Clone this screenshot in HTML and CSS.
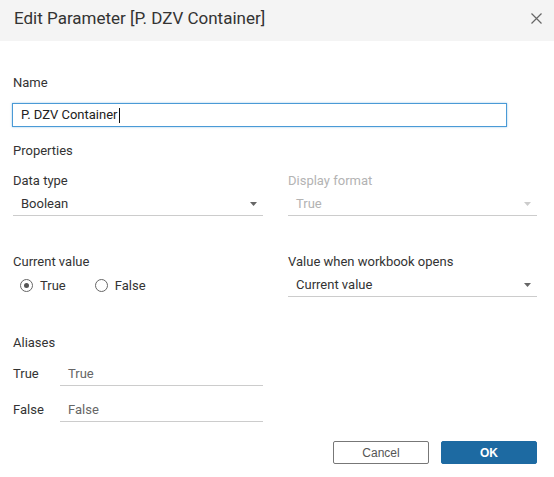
FILE: index.html
```html
<!DOCTYPE html>
<html lang="en">
<head>
<meta charset="utf-8">
<title>Edit Parameter</title>
<link rel="stylesheet" href="styles.css">
</head>
<body>
<div class="dialog">
  <header class="dlg-head">
    <h1 class="dlg-title">Edit Parameter [P. DZV Container]</h1>
    <button class="close-btn" aria-label="Close">
      <svg width="11" height="11" viewBox="0 0 11 11"><path d="M0.5 0.5 L10.5 10.5 M10.5 0.5 L0.5 10.5" stroke="#666" stroke-width="1.2" fill="none"/></svg>
    </button>
  </header>
  <main class="dlg-body">
    <div class="lbl name-lbl">Name</div>
    <div class="name-input"><span>P. DZV Container</span><span class="caret"></span></div>

    <div class="lbl section-title">Properties</div>
    <div class="grid row1">
      <div class="field">
        <div class="lbl">Data type</div>
        <div class="select">
          <span>Boolean</span>
          <svg class="arrow" width="7" height="4" viewBox="0 0 7 4"><path d="M0 0 H7 L3.5 4 Z" fill="#666"/></svg>
        </div>
      </div>
      <div class="field disabled">
        <div class="lbl">Display format</div>
        <div class="select">
          <span>True</span>
          <svg class="arrow" width="7" height="4" viewBox="0 0 7 4"><path d="M0 0 H7 L3.5 4 Z" fill="#ccc"/></svg>
        </div>
      </div>
    </div>

    <div class="grid row2">
      <div class="field">
        <div class="lbl">Current value</div>
        <div class="radios">
          <label class="radio"><span class="circle checked"></span><span>True</span></label>
          <label class="radio"><span class="circle"></span><span>False</span></label>
        </div>
      </div>
      <div class="field">
        <div class="lbl">Value when workbook opens</div>
        <div class="select">
          <span>Current value</span>
          <svg class="arrow" width="7" height="4" viewBox="0 0 7 4"><path d="M0 0 H7 L3.5 4 Z" fill="#666"/></svg>
        </div>
      </div>
    </div>

    <div class="lbl section-title aliases-title">Aliases</div>
    <div class="alias-row first">
      <span class="alias-lbl">True</span>
      <div class="alias-input">True</div>
    </div>
    <div class="alias-row">
      <span class="alias-lbl">False</span>
      <div class="alias-input">False</div>
    </div>

    <div class="buttons">
      <button class="btn cancel">Cancel</button>
      <button class="btn ok">OK</button>
    </div>
  </main>
</div>
</body>
</html>
```

FILE: styles.css
```css
html, body {
  margin: 0;
  padding: 0;
  background: #fff;
}
body {
  font-family: Roboto, "Liberation Sans", sans-serif;
  font-size: 13px;
  color: #333;
  width: 554px;
  height: 477px;
  overflow: hidden;
}
.dialog {
  width: 554px;
}
.dlg-head {
  height: 41px;
  box-sizing: border-box;
  background: #f4f4f4;
  display: flex;
  align-items: flex-start;
  justify-content: space-between;
  padding: 8px 12px 0 14px;
}
.dlg-title {
  margin: 0;
  font-size: 17px;
  font-weight: 400;
  line-height: 20px;
  color: #333;
}
.close-btn {
  margin-top: 5px;
  padding: 0;
  border: none;
  background: none;
  width: 11px;
  height: 11px;
  display: block;
}
.close-btn svg {
  display: block;
}
.dlg-body {
  padding: 0 17px 0 13px;
}
.lbl {
  line-height: 16px;
}
.name-lbl {
  margin-top: 34px;
}
.name-input {
  margin-top: 12px;
  margin-left: -1px;
  width: 495px;
  height: 24px;
  box-sizing: border-box;
  border: 1px solid #4a9ad6;
  box-shadow: 0 0 2px rgba(74, 154, 214, 0.55);
  padding: 0 8px;
  line-height: 22px;
  color: #222;
  display: flex;
  align-items: center;
}
.caret {
  display: inline-block;
  width: 1px;
  height: 15px;
  background: #111;
  margin-left: 1px;
}
.section-title {
  margin-top: 16px;
}
.grid {
  display: grid;
  grid-template-columns: 250px 249px;
  column-gap: 25px;
}
.row1 {
  margin-top: 14px;
}
.row2 {
  margin-top: 38px;
}
.select {
  margin-top: 3px;
  height: 24px;
  box-sizing: border-box;
  border-bottom: 1px solid #ccc;
  display: flex;
  align-items: center;
  justify-content: space-between;
  padding: 0 6px 0 8px;
  color: #333;
}
.arrow {
  display: block;
}
.disabled .lbl,
.disabled .select {
  color: #b3b3b3;
}
.radios {
  margin-top: 7px;
  height: 16px;
  display: flex;
  align-items: center;
  padding-left: 7px;
  gap: 29px;
}
.radio {
  display: flex;
  align-items: center;
  gap: 7px;
}
.circle {
  width: 13px;
  height: 13px;
  box-sizing: border-box;
  border: 1px solid #666;
  border-radius: 50%;
  display: flex;
  align-items: center;
  justify-content: center;
}
.circle.checked::after {
  content: "";
  width: 5px;
  height: 5px;
  border-radius: 50%;
  background: #555;
}
.aliases-title {
  margin-top: 38px;
}
.alias-row {
  display: flex;
  margin-top: 12px;
}
.alias-row.first {
  margin-top: 11px;
}
.alias-lbl {
  width: 47px;
  line-height: 23px;
}
.alias-input {
  width: 203px;
  height: 24px;
  box-sizing: border-box;
  border-bottom: 1px solid #ccc;
  padding-left: 8px;
  line-height: 23px;
  color: #666;
}
.buttons {
  margin-top: 19px;
  display: flex;
  justify-content: flex-end;
  gap: 12px;
}
.btn {
  width: 96px;
  height: 23px;
  box-sizing: border-box;
  border-radius: 2px;
  font-family: "Liberation Sans", Arial, sans-serif;
  font-size: 12px;
  padding: 0;
}
.cancel {
  background: #fff;
  border: 1px solid #777;
  color: #555;
}
.ok {
  background: #1d6aa2;
  border: 1px solid #1d6aa2;
  color: #fff;
  font-weight: 700;
}
```
